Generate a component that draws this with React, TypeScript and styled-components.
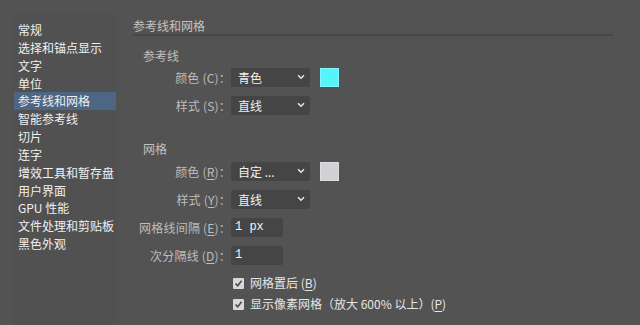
import React from 'react';
import styled, { createGlobalStyle } from 'styled-components';

const Global = createGlobalStyle`
  html, body {
    margin: 0;
    padding: 0;
    background: #535353;
    font-family: "Noto Sans CJK SC", "Liberation Sans", sans-serif;
    font-size: 12px;
  }
`;

const Page = styled.div`
  display: flex;
  width: 640px;
  height: 325px;
  overflow: hidden;
  background: #535353;
`;

const Sidebar = styled.ul`
  list-style: none;
  margin: 14px 0 0 12px;
  padding: 7px 0 0 2px;
  width: 104px;
  background: #515152;
`;

const NavItem = styled.li<{ $active?: boolean }>`
  height: 17.85px;
  line-height: 17.85px;
  padding-left: 4px;
  margin-right: 2px;
  color: #f0f0f0;
  font-size: 12px;
  white-space: nowrap;
  background: ${p => (p.$active ? '#4d6684' : 'transparent')};
`;

const Main = styled.div`
  margin-left: 15px;
  padding-top: 18px;
  width: 480px;
`;

const Header = styled.div`
  color: #c4c4c4;
  font-size: 12px;
  line-height: 16px;
  height: 16px;
  border-bottom: 2px solid #474747;
`;

const SectionTitle = styled.div<{ $top: number }>`
  margin: ${p => p.$top}px 0 0 10px;
  color: #c0c0c0;
  font-size: 12px;
  line-height: 16px;
`;

const Form = styled.div<{ $top: number }>`
  display: grid;
  grid-template-columns: 98px auto;
  row-gap: 9px;
  margin-top: ${p => p.$top}px;
`;

const Label = styled.label`
  color: #bdbdbd;
  font-size: 12px;
  line-height: 19px;
  text-align: right;
  white-space: nowrap;
  letter-spacing: 0.2px;
  u {
    text-decoration: underline;
    text-underline-offset: 2px;
  }
`;

const Field = styled.div`
  display: flex;
  align-items: center;
  gap: 10px;
  height: 19px;
`;

const Select = styled.div`
  position: relative;
  width: 72px;
  height: 19px;
  padding-left: 7px;
  background: #454545;
  border-radius: 2px;
  color: #f0f0f0;
  font-size: 12px;
  line-height: 19px;
  svg {
    position: absolute;
    right: 5px;
    top: 6px;
  }
`;

const Input = styled.div`
  width: 48px;
  height: 19px;
  padding-left: 4px;
  background: #454545;
  border-radius: 2px;
  color: #f4f4f4;
  font-family: "Liberation Mono", "DejaVu Sans Mono", monospace;
  font-size: 12px;
  line-height: 18px;
`;

const Swatch = styled.div<{ $color: string }>`
  width: 19px;
  height: 19px;
  background: ${p => p.$color};
  box-shadow: inset 0 0 0 1px rgba(255, 255, 255, 0.25);
`;

const Checks = styled.div`
  display: flex;
  flex-direction: column;
  gap: 5px;
  margin: 10px 0 0 98px;
`;

const CheckRow = styled.div`
  display: flex;
  align-items: center;
  gap: 6px;
  height: 16px;
  color: #e6e6e6;
  font-size: 12px;
  line-height: 16px;
  u {
    text-underline-offset: 2px;
  }
`;

const Box = styled.span`
  display: inline-flex;
  align-items: center;
  justify-content: center;
  width: 11px;
  height: 11px;
  margin-left: 2px;
  background: #d8d8d8;
  border-radius: 1px;
`;

const Chevron = () => (
  <svg width="8" height="6" viewBox="0 0 8 6">
    <path d="M1 1.2 L4 4.2 L7 1.2" fill="none" stroke="#e8e8e8" strokeWidth="1.5" />
  </svg>
);

const Tick = () => (
  <svg width="9" height="9" viewBox="0 0 9 9">
    <path d="M1.5 4.5 L3.7 6.8 L7.6 1.8" fill="none" stroke="#4a4a4a" strokeWidth="1.6" />
  </svg>
);

const nav = [
  '常规',
  '选择和锚点显示',
  '文字',
  '单位',
  '参考线和网格',
  '智能参考线',
  '切片',
  '连字',
  '增效工具和暂存盘',
  '用户界面',
  'GPU 性能',
  '文件处理和剪贴板',
  '黑色外观',
];

const App = () => (
  <>
    <Global />
    <Page>
      <Sidebar>
        {nav.map(n => (
          <NavItem key={n} $active={n === '参考线和网格'}>{n}</NavItem>
        ))}
      </Sidebar>
      <Main>
        <Header>参考线和网格</Header>
        <SectionTitle $top={12}>参考线</SectionTitle>
        <Form $top={4}>
          <Label>颜色 (C)：</Label>
          <Field>
            <Select>青色<Chevron /></Select>
            <Swatch $color="#55f4fb" />
          </Field>
          <Label>样式 (S)：</Label>
          <Field>
            <Select>直线<Chevron /></Select>
          </Field>
        </Form>
        <SectionTitle $top={26}>网格</SectionTitle>
        <Form $top={5}>
          <Label>颜色 (<u>R</u>)：</Label>
          <Field>
            <Select>自定 ...<Chevron /></Select>
            <Swatch $color="#d2d2d4" />
          </Field>
          <Label>样式 (<u>Y</u>)：</Label>
          <Field>
            <Select>直线<Chevron /></Select>
          </Field>
          <Label>网格线间隔 (<u>E</u>)：</Label>
          <Field>
            <Input>1 px</Input>
          </Field>
          <Label>次分隔线 (<u>D</u>)：</Label>
          <Field>
            <Input>1</Input>
          </Field>
        </Form>
        <Checks>
          <CheckRow>
            <Box><Tick /></Box>
            <span>网格置后 (<u>B</u>)</span>
          </CheckRow>
          <CheckRow>
            <Box><Tick /></Box>
            <span>显示像素网格（放大 600% 以上）(<u>P</u>)</span>
          </CheckRow>
        </Checks>
      </Main>
    </Page>
  </>
);

export default App;
